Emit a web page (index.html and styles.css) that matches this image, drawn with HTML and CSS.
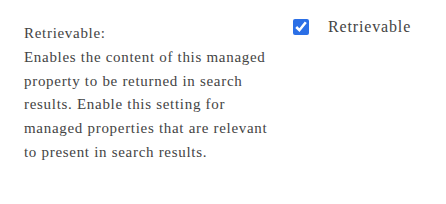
FILE: index.html
```html
<!DOCTYPE html>
<html lang="en">
<head>
<meta charset="UTF-8">
<title>Retrievable</title>
<link rel="stylesheet" href="styles.css">
</head>
<body>
<div class="setting-row">
  <div class="setting-desc">
    Retrievable:<br>
    Enables the content of this managed property to be returned in search results. Enable this setting for managed properties that are relevant to present in search results.
  </div>
  <label class="setting-option">
    <input type="checkbox" checked>
    <span>Retrievable</span>
  </label>
</div>
</body>
</html>
```
FILE: styles.css
```css
body {
  margin: 0;
  padding: 0;
  background: #fff;
  font-family: "Liberation Serif", "Times New Roman", serif;
  color: #444;
}

.setting-row {
  display: flex;
  align-items: flex-start;
  padding: 22px 0 0 24px;
}

.setting-desc {
  width: 250px;
  font-size: 15px;
  line-height: 23.8px;
  letter-spacing: 0.7px;
}

.setting-option {
  display: flex;
  align-items: center;
  margin-left: 19px;
  margin-top: -4px;
  font-size: 16px;
  letter-spacing: 0.85px;
}

.setting-option input {
  width: 16px;
  height: 16px;
  margin: 0 19px 0 0;
  accent-color: #2b6fe6;
}
```
